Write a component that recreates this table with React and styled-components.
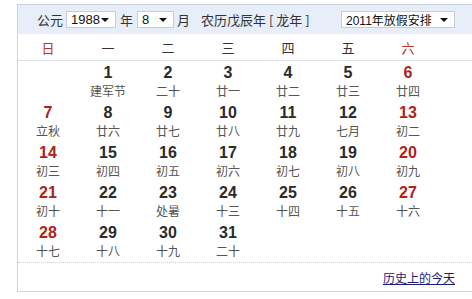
import React from 'react'
import styled, { createGlobalStyle } from 'styled-components'

const Global = createGlobalStyle`
  html, body {
    margin: 0;
    padding: 0;
    background: #fff;
    overflow: hidden;
  }
  body {
    font-family: "Liberation Sans", Arial, "Noto Sans CJK SC", sans-serif;
  }
`

const Panel = styled.div`
  width: 470px;
  margin: 4px 0 0 17px;
  border: 1px solid #cdd1d8;
  background: #fff;
`

const Toolbar = styled.div`
  display: flex;
  align-items: center;
  height: 29px;
  padding: 0 33px 0 19px;
  background: #e7eef9;
  font-family: "Noto Sans CJK SC", sans-serif;
  font-size: 13px;
  color: #333;
`

const Label = styled.span`
  margin-left: ${p => p.gap || 0}px;
  line-height: 17px;
`

const Select = styled.div`
  display: flex;
  align-items: center;
  justify-content: space-between;
  box-sizing: border-box;
  width: ${p => p.w}px;
  height: 17px;
  margin-left: ${p => p.gap || 0}px;
  padding: 0 6px 0 4px;
  border: 1px solid #c9ced6;
  background: #fff;
  font-family: "Liberation Sans", Arial, "Noto Sans CJK SC", sans-serif;
  font-size: ${p => p.fs || 13}px;
  color: #111;
`

const Arrow = styled.i`
  width: 0;
  height: 0;
  border-left: 4px solid transparent;
  border-right: 4px solid transparent;
  border-top: 4px solid #111;
`

const Spacer = styled.div`
  flex: 1;
`

const Grid = styled.div`
  display: grid;
  grid-template-columns: repeat(7, 60px);
`

const WeekRow = styled(Grid)`
  height: 26px;
  align-items: center;
  border-bottom: 1px solid #dde0e5;
`

const WeekDay = styled.div`
  text-align: center;
  font-family: "Noto Sans CJK SC", sans-serif;
  font-size: 13px;
  color: ${p => (p.red ? '#b8322a' : '#333')};
`

const Cell = styled.div`
  height: 40px;
  box-sizing: border-box;
  padding-top: 3px;
  text-align: center;
`

const Num = styled.div`
  font-size: 16px;
  font-weight: bold;
  line-height: 18px;
  color: ${p => (p.red ? '#ad2219' : '#2b2b2b')};
`

const Lunar = styled.div`
  font-family: "Noto Sans CJK SC", sans-serif;
  font-size: 12px;
  line-height: 18px;
  color: #555;
`

const Footer = styled.div`
  display: flex;
  justify-content: flex-end;
  align-items: center;
  height: 28px;
  margin-top: 1px;
  padding-right: 33px;
  border-top: 1px dotted #cfd2d8;
`

const Link = styled.a`
  font-family: "Noto Sans CJK SC", sans-serif;
  font-size: 12px;
  color: #1b1b78;
  text-decoration: underline;
`

const days = [
  null, [1, '建军节'], [2, '二十'], [3, '廿一'], [4, '廿二'], [5, '廿三'], [6, '廿四'],
  [7, '立秋'], [8, '廿六'], [9, '廿七'], [10, '廿八'], [11, '廿九'], [12, '七月'], [13, '初二'],
  [14, '初三'], [15, '初四'], [16, '初五'], [17, '初六'], [18, '初七'], [19, '初八'], [20, '初九'],
  [21, '初十'], [22, '十一'], [23, '处暑'], [24, '十三'], [25, '十四'], [26, '十五'], [27, '十六'],
  [28, '十七'], [29, '十八'], [30, '十九'], [31, '二十'],
]

const weekdays = ['日', '一', '二', '三', '四', '五', '六']

export default function App() {
  return (
    <>
      <Global />
      <Panel>
        <Toolbar>
          <Label>公元</Label>
          <Select w={50} gap={3}>1988<Arrow /></Select>
          <Label gap={4}>年</Label>
          <Select w={37} gap={4}>8<Arrow /></Select>
          <Label gap={3}>月</Label>
          <Label gap={11}>农历戊辰年 [ 龙年 ]</Label>
          <Spacer />
          <Select w={114} fs={12}>2011年放假安排<Arrow /></Select>
        </Toolbar>
        <WeekRow>
          {weekdays.map((d, i) => (
            <WeekDay key={d} red={i === 0 || i === 6}>{d}</WeekDay>
          ))}
        </WeekRow>
        <Grid>
          {days.map((d, i) =>
            d ? (
              <Cell key={i}>
                <Num red={i % 7 === 0 || i % 7 === 6}>{d[0]}</Num>
                <Lunar>{d[1]}</Lunar>
              </Cell>
            ) : (
              <Cell key={i} />
            )
          )}
        </Grid>
        <Footer>
          <Link href="#">历史上的今天</Link>
        </Footer>
      </Panel>
    </>
  )
}
